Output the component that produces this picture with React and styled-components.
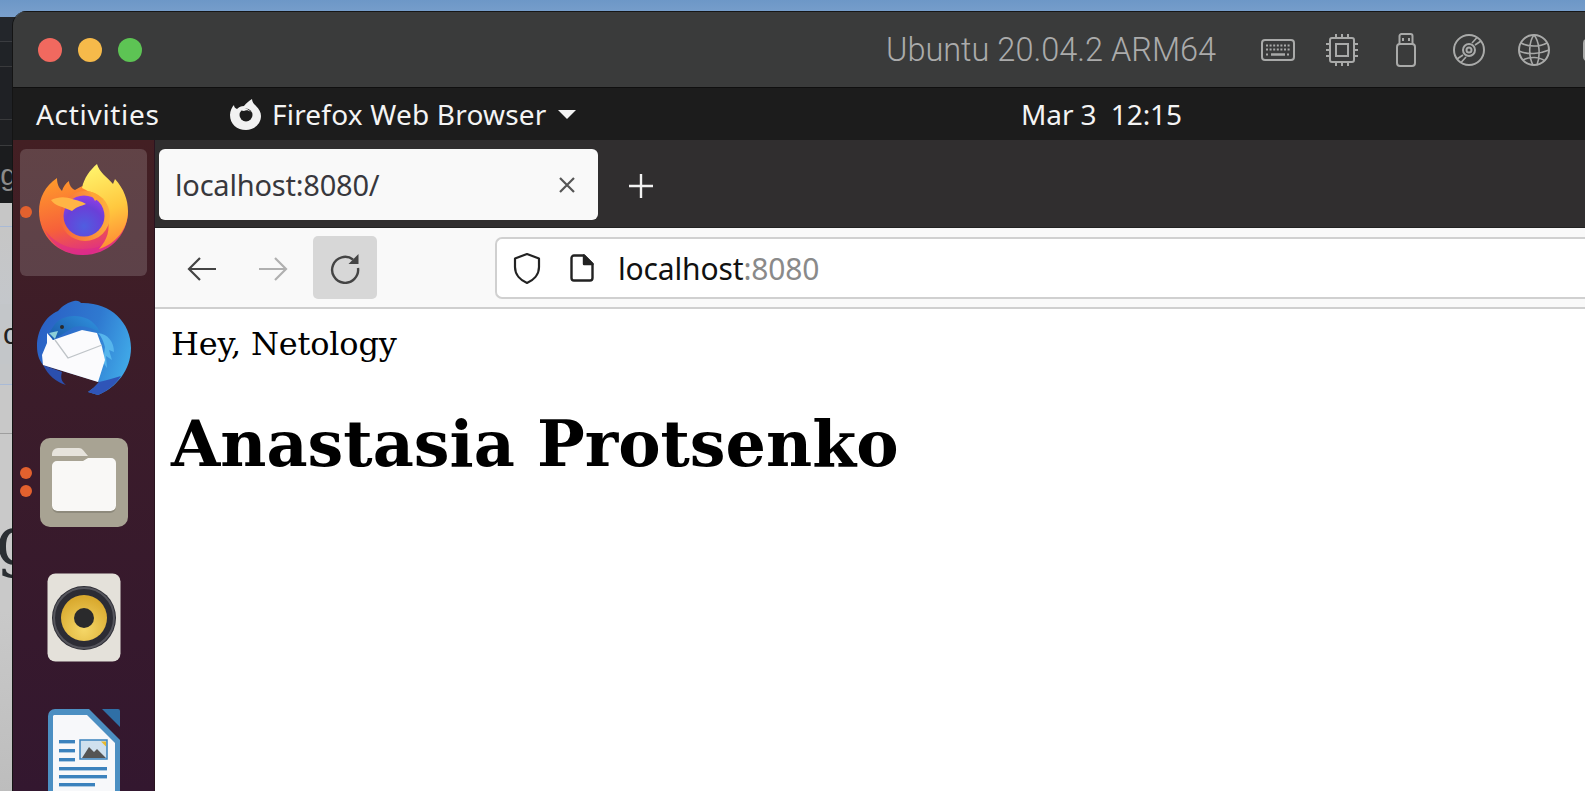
import React from 'react'
import styled, { createGlobalStyle } from 'styled-components'

const Global = createGlobalStyle`
  html, body { margin: 0; padding: 0; background: #fff; overflow: hidden; }
`

const Page = styled.div`
  width: 1585px;
  height: 791px;
  display: flex;
  overflow: hidden;
  background: linear-gradient(#6d97c7 0, #7aa0cc 17px, #22252a 17px, #22252a 791px);
`
const Backdrop = styled.div`
  width: 12px;
  flex: none;
  padding-top: 17px;
  display: flex;
  flex-direction: column;
  overflow: hidden;
`
const BackdropBand = styled.div`
  height: ${p => p.$h}px;
  flex: none;
  background: ${p => p.$bg};
  border-bottom: ${p => (p.$line ? `1px solid ${p.$line}` : 'none')};
  box-sizing: border-box;
  display: flex;
  align-items: center;
  justify-content: flex-end;
  color: ${p => p.$color || '#222'};
  font-family: ${p => p.$serif ? '"DejaVu Serif", serif' : '"Liberation Sans", sans-serif'};
  font-size: ${p => p.$size || 30}px;
  line-height: 1;
  overflow: hidden;
`
const Glyph = styled.span`
  flex: none;
  margin-right: ${p => p.$shift}px;
`
const Column = styled.div`
  flex: 1;
  min-width: 0;
  display: flex;
  flex-direction: column;
  padding-top: 11px;
`
const Window = styled.div`
  flex: 1;
  min-height: 0;
  display: flex;
  flex-direction: column;
  border-top-left-radius: 15px;
  border-left: 1px solid #141414;
  overflow: hidden;
`
const TitleBar = styled.div`
  height: 77px;
  flex: none;
  box-sizing: border-box;
  background: #3a3b3b;
  border-top: 1px solid #161616;
  border-bottom: 1px solid #0f0f0f;
  display: flex;
  align-items: center;
  padding-left: 25px;
`
const Light = styled.span`
  width: 24px;
  height: 24px;
  border-radius: 50%;
  background: ${p => p.$c};
  margin-right: 16px;
  flex: none;
`
const VmName = styled.div`
  margin-left: 728px;
  width: 327px;
  flex: none;
  font-family: Roboto, sans-serif;
  font-weight: 300;
  font-size: 32.5px;
  color: #ababab;
  white-space: nowrap;
`
const VmIcons = styled.div`
  margin-left: 48px;
  display: flex;
  align-items: center;
  flex: none;
  color: #a9aaa9;
`
const VmIcon = styled.svg`
  flex: none;
  margin-right: ${p => p.$mr}px;
  fill: none;
  stroke: currentColor;
  stroke-width: 2;
`
const Panel = styled.div`
  height: 52px;
  flex: none;
  background: #1c1c1c;
  color: #f4f4f4;
  display: flex;
  align-items: center;
  font-family: "Noto Sans", sans-serif;
  font-size: 28px;
  white-space: nowrap;
`
const Activities = styled.span`
  margin-left: 23px;
  width: 124px;
  flex: none;
  letter-spacing: 0.7px;
`
const AppMenu = styled.div`
  margin-left: 69px;
  display: flex;
  align-items: center;
  flex: none;
`
const AppName = styled.span`
  margin-left: 10px;
  width: 273px;
  letter-spacing: 0.2px;
`
const Caret = styled.span`
  margin-left: 13px;
  width: 0;
  height: 0;
  border-left: 9px solid transparent;
  border-right: 9px solid transparent;
  border-top: 9px solid #f4f4f4;
`
const Clock = styled.span`
  margin-left: 445px;
  flex: none;
  white-space: pre;
  letter-spacing: -0.1px;
`
const Desktop = styled.div`
  flex: 1;
  min-height: 0;
  display: flex;
`
const Dock = styled.div`
  width: 142px;
  flex: none;
  box-sizing: border-box;
  padding: 9px 7px 0;
  display: flex;
  flex-direction: column;
  gap: 8.1px;
  background: linear-gradient(#431f23, #3b1c2a 40%, #33172f);
  border-right: 1px solid #2a1420;
`
const DockSlot = styled.div`
  height: 127px;
  flex: none;
  box-sizing: border-box;
  padding-bottom: ${p => (p.$active ? 6 : 0)}px;
  position: relative;
  display: flex;
  align-items: center;
  justify-content: center;
  border-radius: 6px;
  background: ${p => (p.$active ? 'rgba(255,255,255,0.16)' : 'transparent')};
`
const RunDot = styled.span`
  position: absolute;
  left: 0;
  top: ${p => p.$top}px;
  width: 12px;
  height: 12px;
  border-radius: 50%;
  background: #e2612e;
`
const Browser = styled.div`
  flex: 1;
  min-width: 0;
  display: flex;
  flex-direction: column;
  background: #fff;
`
const TabStrip = styled.div`
  height: 88px;
  flex: none;
  box-sizing: border-box;
  background: #302e2f;
  border-bottom: 1px solid #222;
  padding: 9px 0 0 4px;
  display: flex;
  align-items: flex-start;
`
const Tab = styled.div`
  width: 439px;
  height: 71px;
  flex: none;
  box-sizing: border-box;
  border-radius: 6px;
  background: #f9f9f9;
  padding: 0 22px 0 16px;
  display: flex;
  align-items: center;
  justify-content: space-between;
  font-family: "Noto Sans", sans-serif;
  font-size: 29px;
  letter-spacing: -0.2px;
  color: #38383d;
`
const NewTab = styled.div`
  margin: 25px 0 0 31px;
  color: #f2f2f2;
  display: flex;
`
const Toolbar = styled.div`
  height: 81px;
  flex: none;
  box-sizing: border-box;
  background: #f9f9f9;
  border-bottom: 2px solid #cfcfcf;
  padding: 9px 0 0 0;
  display: flex;
  align-items: flex-start;
`
const NavButton = styled.div`
  width: 64px;
  height: 63px;
  flex: none;
  margin-left: ${p => p.$ml}px;
  margin-top: ${p => (p.$hover ? -1 : 0)}px;
  border-radius: 5px;
  background: ${p => (p.$hover ? '#d7d7d7' : 'transparent')};
  color: ${p => (p.$off ? '#b0b0b0' : '#444')};
  display: flex;
  align-items: center;
  justify-content: center;
`
const UrlBar = styled.div`
  flex: 1;
  height: 62px;
  box-sizing: border-box;
  margin-left: 118px;
  background: #fff;
  border: 2px solid #d0d0d0;
  border-right: none;
  border-radius: 7px 0 0 7px;
  display: flex;
  align-items: center;
  padding-left: 15px;
  font-family: "Noto Sans", sans-serif;
  font-size: 30px;
  letter-spacing: -0.15px;
  color: #111;
`
const PageGlyph = styled.svg`
  margin-left: 28px;
  flex: none;
  fill: none;
  stroke: #222;
  stroke-width: 2.4;
  stroke-linejoin: round;
`
const UrlText = styled.span`
  margin-left: 24px;
  margin-top: 1px;
`
const UrlPort = styled.span`
  color: #8a8a8a;
`
const PageBody = styled.div`
  flex: 1;
  padding: 13px 16px 0;
  font-family: "DejaVu Serif", serif;
  color: #000;
`
const Greeting = styled.div`
  font-size: 32px;
  line-height: 44px;
  letter-spacing: -0.2px;
`
const Name = styled.h1`
  margin: 39px 0 0;
  font-size: 63.5px;
  line-height: 78px;
  font-weight: 700;
`

const FirefoxLogo = () => (
  <svg width="90" height="92" viewBox="0 0 90 92">
    <defs>
      <linearGradient id="ffBody" x1="0.2" y1="0" x2="0.5" y2="1">
        <stop offset="0" stopColor="#ff9a2b" />
        <stop offset="0.62" stopColor="#f6603a" />
        <stop offset="1" stopColor="#de2f86" />
      </linearGradient>
      <linearGradient id="ffTail" x1="0.4" y1="0" x2="0.6" y2="1">
        <stop offset="0" stopColor="#fff36b" />
        <stop offset="0.55" stopColor="#ffc83f" />
        <stop offset="1" stopColor="#ff8a34" />
      </linearGradient>
      <linearGradient id="ffRing" x1="0" y1="0.5" x2="1" y2="0.3">
        <stop offset="0" stopColor="#f6683a" />
        <stop offset="1" stopColor="#ffb33c" />
      </linearGradient>
      <radialGradient id="ffGlobe" cx="0.5" cy="0.75" r="0.8">
        <stop offset="0" stopColor="#4f5ee0" />
        <stop offset="0.6" stopColor="#6a3fd8" />
        <stop offset="1" stopColor="#9a3ee8" />
      </radialGradient>
    </defs>
    <path fill="url(#ffBody)" d="M18 14C18 20 20 24 23 27C24 23 27 19 30 17C30 21 33 25 36 26C40 24 42 22 45 22L70 40L89 47C89 72 69 91 44 91C19 91 0 72 0 47C0 34 6 22 18 14Z" />
    <path fill="#d9268f" opacity="0.5" d="M6 66C14 78 28 85 44 85C52 85 58 84 64 81C57 88 50 91 44 91C27 91 13 81 6 66Z" />
    <path fill="url(#ffTail)" d="M58 0C60 8 68 13 74 20L76 15C85 25 89 36 89 47C89 66 76 80 60 85C68 76 72 66 68 52C64 36 52 28 43 24C45 14 51 6 58 0Z" />
    <circle cx="46" cy="52" r="25" fill="url(#ffRing)" />
    <circle cx="45" cy="52" r="20.5" fill="url(#ffGlobe)" />
    <path fill="#ffb545" d="M12 36C20 32 28 33 33 35C38 36 44 38 47 40C42 42 37 43 33 47C28 45 24 43 20 42C17 41 14 39 12 36Z" />
    <path fill="#ffa536" d="M49 27C55 28 60 31 64 36C60 35 58 35 56 37C54 33 52 30 49 27Z" />
  </svg>
)

const ThunderbirdLogo = () => (
  <svg width="96" height="96" viewBox="0 0 96 96">
    <defs>
      <linearGradient id="tbBody" x1="0" y1="0.2" x2="1" y2="0.5">
        <stop offset="0" stopColor="#2a5fc4" />
        <stop offset="0.6" stopColor="#2f79d0" />
        <stop offset="1" stopColor="#3fa6e6" />
      </linearGradient>
      <linearGradient id="tbHead" x1="0" y1="0.8" x2="1" y2="0.2">
        <stop offset="0" stopColor="#1c5fae" />
        <stop offset="1" stopColor="#2f8fdc" />
      </linearGradient>
    </defs>
    <path fill="url(#tbBody)" d="M38 1C42 0 44 2 45 3C74 2 95 22 95 48C95 70 80 88 62 95L52 92C56 89 60 86 63 82L7 65C3 60 1 54 1 46C1 30 10 16 22 11C27 5 33 2 38 1Z" />
    <path fill="#2b4fae" d="M7 65L26 72C24 78 26 82 30 85C20 82 12 75 7 65Z" />
    <path fill="#2f55b8" d="M63 82C60 86 56 89 52 92L62 95C72 91 80 84 85 76C78 78 72 80 63 82Z" />
    <path fill="#56b5ec" d="M62 33C72 34 78 42 78 52L73 50L76 60L70 56L71 68L67 62L69 47C67 40 65 36 62 33Z" />
    <path fill="#fbfbfd" d="M11 33L17 40L46 30L61 33L66 47L69 60L62 82L7 65L6 55L11 43Z" />
    <path fill="none" stroke="#bfc4c8" strokeWidth="1.3" d="M19 40L32 58L66 45" />
    <path fill="url(#tbHead)" d="M17 27C22 18 34 14 46 17C55 19 62 26 64 33C56 27 46 25 38 27L17 40L13 33Z" />
    <circle cx="26" cy="27" r="2" fill="#2a2a2a" />
    <path fill="#8ed0d8" d="M13 33L22 31L19 39Z" />
  </svg>
)

const FilesLogo = () => (
  <svg width="88" height="89" viewBox="0 0 88 89">
    <rect x="0" y="0" width="88" height="89" rx="10" fill="#a8a393" />
    <path d="M12 16a6 6 0 0 1 6-6h21a5 5 0 0 1 4 2l5 6H12Z" fill="#e6e3dc" />
    <path d="M12 28a5 5 0 0 1 5-5l26 0l5-3h23a5 5 0 0 1 5 5v43a5 5 0 0 1-5 5H17a5 5 0 0 1-5-5Z" fill="#f9f8f6" />
    <path d="M12 68a5 5 0 0 0 5 5h54a5 5 0 0 0 5-5v1a6 6 0 0 1-6 6H18a6 6 0 0 1-6-6Z" fill="#8e8a7c" />
  </svg>
)

const RhythmboxLogo = () => (
  <svg width="74" height="89" viewBox="0 0 74 89">
    <defs>
      <radialGradient id="rbCone" cx="0.5" cy="0.75" r="0.7">
        <stop offset="0" stopColor="#f5d768" />
        <stop offset="1" stopColor="#d9a92e" />
      </radialGradient>
    </defs>
    <rect x="0.5" y="0.5" width="73" height="88" rx="8" fill="#e4e1da" />
    <circle cx="37" cy="45" r="32" fill="#2c2c34" />
    <circle cx="37" cy="45" r="30" fill="none" stroke="#55555c" strokeWidth="2" />
    <circle cx="37" cy="45" r="23" fill="url(#rbCone)" />
    <circle cx="37" cy="45" r="10" fill="#2a2a2c" />
  </svg>
)

const WriterLogo = () => (
  <svg width="74" height="89" viewBox="0 0 74 89">
    <path d="M55 1H71a2 2 0 0 1 2 2V19Z" fill="#2f6fa6" />
    <path d="M8 1H42L73 32V89H1V8a7 7 0 0 1 7-7Z" fill="#4c8fc2" />
    <path d="M7 7H40L68 35V89H6V8Z" fill="#f7f8fa" />
    <g fill="#3b82bd">
      <rect x="12" y="32" width="16" height="3.4" />
      <rect x="12" y="41" width="16" height="3.4" />
      <rect x="12" y="50" width="16" height="3.4" />
      <rect x="12" y="59" width="48" height="3.4" />
      <rect x="12" y="67" width="48" height="3.4" />
      <rect x="12" y="75" width="36" height="3.4" />
    </g>
    <rect x="33" y="32" width="27" height="19" fill="#cfe0ee" stroke="#3b82bd" strokeWidth="1.5" />
    <path d="M35 50L42 39L47 44L50 41L59 50Z" fill="#555" />
    <path d="M54 33.5h5v5Z" fill="#e9b92c" />
  </svg>
)

const PanelFirefox = () => (
  <svg width="33" height="33" viewBox="0 0 33 33">
    <path fill="#f1f1f1" d="M23 1C23 4 25 6 27 8C30 11 32 14 32 18C32 26 25 32 17 32C8 32 1 26 1 17C1 13 3 9 5 7C5 9 6 10 8 11C10 9 12 8 15 8C17 5 20 3 23 1Z" />
    <circle cx="17" cy="17" r="6.5" fill="#1c1c1c" />
    <path fill="#f1f1f1" d="M10 10C14 9 19 10 22 14C19 12 17 12 15 13C13 13 11 12 10 10Z" />
  </svg>
)

const KeyboardIcon = () => (
  <VmIcon $mr={31} width="34" height="22" viewBox="0 0 34 22">
    <rect x="1" y="1" width="32" height="20" rx="3" />
    <path strokeDasharray="2 1.6" d="M5 6.5H29M5 10.5H29" />
    <path d="M10 15.5H24" strokeWidth="2.4" />
    <path strokeDasharray="2 2" d="M5 15.5H8M26 15.5H29" />
  </VmIcon>
)

const ChipIcon = () => (
  <VmIcon $mr={38} width="32" height="32" viewBox="0 0 32 32">
    <rect x="4" y="4" width="24" height="24" rx="2" />
    <rect x="10" y="10" width="12" height="12" />
    <path d="M10 0V4M16 0V4M22 0V4M10 28V32M16 28V32M22 28V32M0 10H4M0 16H4M0 22H4M28 10H32M28 16H32M28 22H32" />
  </VmIcon>
)

const UsbIcon = () => (
  <VmIcon $mr={37} width="20" height="34" viewBox="0 0 20 34">
    <path d="M3.5 11V3a2 2 0 0 1 2-2h9a2 2 0 0 1 2 2v8" />
    <rect x="1" y="11" width="18" height="22" rx="3" />
    <path d="M7 5V8M13 5V8" />
  </VmIcon>
)

const DiscIcon = () => (
  <VmIcon $mr={33} width="32" height="32" viewBox="0 0 32 32">
    <circle cx="16" cy="16" r="15" />
    <circle cx="16" cy="16" r="6" />
    <circle cx="16" cy="16" r="2.5" />
    <path d="M19 9L24 3.5M22 11L28 7M13 23L8 28.5M10 21L4 25" strokeWidth="1.6" />
  </VmIcon>
)

const GlobeIcon = () => (
  <VmIcon $mr={33} width="32" height="32" viewBox="0 0 32 32">
    <circle cx="16" cy="16" r="15" />
    <path d="M16 1C11 7 10 22 15 31M16 1C21 7 23 20 19 31M3 9C10 13 22 13 29 9M1 17C10 21 22 20 31 16M5 26C12 22 22 23 27 27" strokeWidth="1.6" />
  </VmIcon>
)

const ShieldIcon = () => (
  <svg width="30" height="33" viewBox="0 0 30 33" fill="none" stroke="#222" strokeWidth="2.2" strokeLinejoin="round">
    <path d="M15 2L27 6.5V15C27 23 21 28.5 15 31C9 28.5 3 23 3 15V6.5Z" />
  </svg>
)

const PageIcon = () => (
  <PageGlyph width="24" height="28" viewBox="0 0 24 28">
    <path d="M4 1.5H14L22.5 10V24a2.5 2.5 0 0 1-2.5 2.5H4A2.5 2.5 0 0 1 1.5 24V4A2.5 2.5 0 0 1 4 1.5Z" />
    <path d="M14 1.5L22.5 10H14Z" fill="#222" />
  </PageGlyph>
)

const ArrowIcon = ({ flip }) => (
  <svg width="32" height="28" viewBox="0 0 32 28" fill="none" stroke="currentColor" strokeWidth="2.2">
    <path d={flip ? 'M2 14H29M18 3L29 14L18 25' : 'M30 14H3M14 3L3 14L14 25'} />
  </svg>
)

const ReloadIcon = () => (
  <svg width="32" height="32" viewBox="0 0 32 32" fill="none" stroke="#444" strokeWidth="2.4">
    <path d="M24 7.5A13 13 0 1 0 29 16" />
    <path d="M29.5 2V12H19.5Z" fill="#444" stroke="none" />
  </svg>
)

const CloseIcon = () => (
  <svg width="18" height="18" viewBox="0 0 18 18" stroke="#555" strokeWidth="2.2">
    <path d="M2 2L16 16M16 2L2 16" />
  </svg>
)

const PlusIcon = () => (
  <svg width="24" height="24" viewBox="0 0 24 24" stroke="currentColor" strokeWidth="2.4">
    <path d="M12 0V24M0 12H24" />
  </svg>
)

export default function App() {
  return (
    <Page>
      <Global />
      <Backdrop>
        <BackdropBand $h={25} $bg="#23262b" $line="#3a3c40" />
        <BackdropBand $h={25} $bg="#202327" $line="#393a3c" />
        <BackdropBand $h={53} $bg="#1f2125" $line="#393a3c" />
        <BackdropBand $h={26} $bg="#1e1f22" $line="#3a3b3d" />
        <BackdropBand $h={57} $bg="#1b1c1e" $color="#8b8b8b" $size={30}>
          <Glyph $shift={-5}>g</Glyph>
        </BackdropBand>
        <BackdropBand $h={24} $bg="#c6c6c6" $line="#a9bad6" />
        <BackdropBand $h={77} $bg="linear-gradient(#c6c6c6, #c4c7cb)" />
        <BackdropBand $h={60} $bg="#c3c6c9" $color="#222" $size={30}>
          <Glyph $shift={-6}>c</Glyph>
        </BackdropBand>
        <BackdropBand $h={21} $bg="#c4c6c8" $line="#a9bad6" />
        <BackdropBand $h={49} $bg="#c8c8c8" $line="#9e9e9e" />
        <BackdropBand $h={37} $bg="#c9c9c9" />
        <BackdropBand $h={140} $bg="#c9c9c9" $color="#2b2f33" $size={66} $serif>
          <Glyph $shift={-26}>g</Glyph>
        </BackdropBand>
        <BackdropBand $h={181} $bg="linear-gradient(#c9c9c9, #bdbdbd)" />
      </Backdrop>
      <Column>
        <Window>
          <TitleBar>
            <Light $c="#f1695f" />
            <Light $c="#f6ba4a" />
            <Light $c="#5dc454" />
            <VmName>Ubuntu 20.04.2 ARM64</VmName>
            <VmIcons>
              <KeyboardIcon />
              <ChipIcon />
              <UsbIcon />
              <DiscIcon />
              <GlobeIcon />
              <VmIcon $mr={0} width="20" height="22" viewBox="0 0 20 22">
                <rect x="1" y="1" width="18" height="20" rx="3" />
              </VmIcon>
            </VmIcons>
          </TitleBar>
          <Panel>
            <Activities>Activities</Activities>
            <AppMenu>
              <PanelFirefox />
              <AppName>Firefox Web Browser</AppName>
              <Caret />
            </AppMenu>
            <Clock>Mar 3  12:15</Clock>
          </Panel>
          <Desktop>
            <Dock>
              <DockSlot $active>
                <RunDot $top={57} />
                <FirefoxLogo />
              </DockSlot>
              <DockSlot>
                <ThunderbirdLogo />
              </DockSlot>
              <DockSlot>
                <RunDot $top={48} />
                <RunDot $top={66} />
                <FilesLogo />
              </DockSlot>
              <DockSlot>
                <RhythmboxLogo />
              </DockSlot>
              <DockSlot>
                <WriterLogo />
              </DockSlot>
            </Dock>
            <Browser>
              <TabStrip>
                <Tab>
                  localhost:8080/
                  <CloseIcon />
                </Tab>
                <NewTab>
                  <PlusIcon />
                </NewTab>
              </TabStrip>
              <Toolbar>
                <NavButton $ml={15}><ArrowIcon /></NavButton>
                <NavButton $ml={7} $off><ArrowIcon flip /></NavButton>
                <NavButton $ml={8} $hover><ReloadIcon /></NavButton>
                <UrlBar>
                  <ShieldIcon />
                  <PageIcon />
                  <UrlText>
                    localhost<UrlPort>:8080</UrlPort>
                  </UrlText>
                </UrlBar>
              </Toolbar>
              <PageBody>
                <Greeting>Hey, Netology</Greeting>
                <Name>Anastasia Protsenko</Name>
              </PageBody>
            </Browser>
          </Desktop>
        </Window>
      </Column>
    </Page>
  )
}
